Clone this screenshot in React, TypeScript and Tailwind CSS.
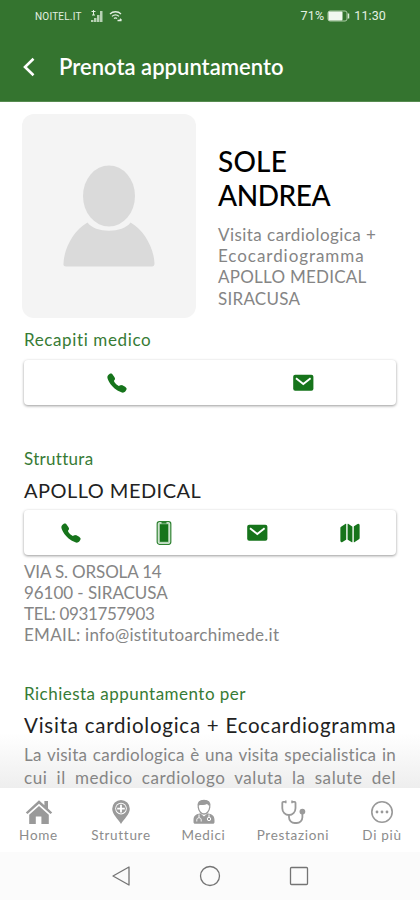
import React from "react";
import { IoCall, IoMap } from "react-icons/io5";

interface NavItem {
  title: string;
  icon: React.ReactNode;
  className: string;
}

const MailIcon = () => (
  <svg width="22" height="22" viewBox="0 0 22 22">
    <rect x="1.200" y="2.800" width="20.200" height="16" rx="2" fill="#16741b" />
    <path d="M4 6.200 11.300 12l7.300-5.800" fill="none" stroke="#fff" strokeWidth="1.900" />
  </svg>
);

const PhoneIcon = () => (
  <svg width="16" height="24" viewBox="0 0 16 24">
    <rect x="1.200" y="0.700" width="13.600" height="22.600" rx="2.200" fill="none" stroke="#2c812f" strokeWidth="1.200" />
    <rect x="2.300" y="1.800" width="11.400" height="20.400" rx="1" fill="#b9d8ba" />
    <rect x="3.800" y="3.200" width="8.400" height="17.600" fill="#16741b" />
    <path d="M5.500 1.800h5" stroke="#16741b" strokeWidth="1.400" />
  </svg>
);

const HomeIcon = () => (
  <svg width="28" height="26" viewBox="0 0 28 26" fill="#9a9a9a">
    <path d="M14 1.200 0.800 13.400l1.700 1.700L14 4.800l11.500 10.300 1.700-1.700-4.200-3.900V2h-3.600v4.200z" />
    <path d="M14 7 4.200 15.700V25h6.600v-7.600h5.600V25h7.400v-9.300z" />
  </svg>
);

const PinIcon = () => (
  <svg width="20" height="26" viewBox="0 0 20 26">
    <path
      d="M10 1a8.800 8.800 0 0 0-8.800 8.800C1.200 15.500 7 20 10 25c3-5 8.800-9.500 8.800-15.200A8.800 8.800 0 0 0 10 1z"
      fill="#9a9a9a"
    />
    <circle cx="10" cy="9.600" r="5.800" fill="#fff" />
    <circle cx="10" cy="9.600" r="4.900" fill="#9a9a9a" />
    <path d="M10 5.800v7.600M6.200 9.600h7.600" stroke="#fff" strokeWidth="1.800" />
  </svg>
);

const DoctorIcon = () => (
  <svg width="24" height="26" viewBox="0 0 24 26">
    <path
      d="M6.300 8.500C5.200 3.500 8 1.300 12 1.300s6.800 2.200 5.700 7.200C17.200 12.400 14.500 15 12 15s-5.200-2.600-5.700-6.500z"
      fill="#fff"
      stroke="#9a9a9a"
      strokeWidth="1.300"
    />
    <path d="M6.300 7.600C5.400 3 8.300 1 12 1s6.600 2 5.700 6.600c-1-1.300-2-2-2.700-2.700-2.200 1.300-6 1-7.300 1.100z" fill="#9a9a9a" />
    <path
      d="M8.300 14.200C4.500 15.300 1.500 16.200 1.500 21v2.300c0 .9.700 1.500 1.600 1.500h17.800c.9 0 1.600-.6 1.600-1.500V21c0-4.800-3-5.700-6.800-6.800L12 17.600z"
      fill="#9a9a9a"
    />
    <path d="M7 15.500v3.200m10-3.200v2.700" stroke="#fff" strokeWidth="1" />
    <circle cx="17" cy="20" r="1.700" fill="none" stroke="#fff" />
    <path d="M4.800 22.500v-1.700c0-2.700 4.400-2.700 4.400 0v1.700" fill="none" stroke="#fff" strokeWidth=".9" />
  </svg>
);

const StethoscopeIcon = () => (
  <svg width="26" height="26" viewBox="0 0 26 26" fill="none" stroke="#9a9a9a">
    <path
      d="M5.800 2.800H3.300c-.7 0-1 .4-1 1v5.400c0 3.800 3 6.800 6.600 6.800s6.600-3 6.600-6.800V3.800c0-.6-.3-1-1-1H12"
      strokeWidth="1.800"
    />
    <path d="M9 16v2.300a5.700 5.700 0 0 0 5.700 5.700h2a5.700 5.700 0 0 0 5.700-5.700V15" strokeWidth="1.800" />
    <circle cx="22.400" cy="12.600" r="1.500" strokeWidth="2.800" />
    <path d="M5.800 1.500v2.700M12 1.500v2.700" strokeWidth="1.500" />
  </svg>
);

const MoreIcon = () => (
  <svg width="24" height="24" viewBox="0 0 24 24">
    <circle cx="12" cy="12" r="10.200" fill="none" stroke="#999" strokeWidth="1.600" />
    <circle cx="7" cy="12" r="1.400" fill="#999" />
    <circle cx="12" cy="12" r="1.400" fill="#999" />
    <circle cx="17" cy="12" r="1.400" fill="#999" />
  </svg>
);

const navItems: NavItem[] = [
  { title: "Home", icon: <HomeIcon />, className: "w-[77px]" },
  { title: "Strutture", icon: <PinIcon />, className: "w-[88px]" },
  { title: "Medici", icon: <DoctorIcon />, className: "w-[77px]" },
  { title: "Prestazioni", icon: <StethoscopeIcon />, className: "w-[102px]" },
  { title: "Di più", icon: <MoreIcon />, className: "w-[76px]" },
];

function StatusBar() {
  return (
    <div className="flex h-8 items-center pl-[35px] pr-[34px] text-[#e3f0e2]">
      <span className="font-['Roboto'] text-[10px] tracking-[0.200px]">NOITEL.IT</span>
      <svg className="ml-2" width="14" height="14" viewBox="0 0 14 14" fill="currentColor">
        <path d="M1 11h2.500v2H1zM4 9h2.500v4H4zM7 6h2.500v7H7zM10 2h2.500v11H10z" opacity=".75" />
        <path d="M1.500 2.500h4M3.500 1v5M2 6h3" stroke="currentColor" fill="none" />
      </svg>
      <svg className="ml-[5px]" width="14" height="14" viewBox="0 0 14 14" fill="none" stroke="currentColor" strokeWidth="1.300">
        <path d="M1 5c3-3 8-3 11 0M3 7.400c2-2 5-2 7 0M5 9.600c1-.9 2-.9 3 0" />
        <path d="M8.500 11.500h4M11 9.800l1.600 1.700" />
      </svg>
      <span className="ml-auto font-['Roboto'] text-[12.500px] tracking-[0.200px]">71%</span>
      <svg className="ml-[3px]" width="23" height="12" viewBox="0 0 23 12">
        <rect x="1" y="1" width="19" height="10" rx="2" fill="none" stroke="#a9cba5" />
        <rect x="1.500" y="1.500" width="14" height="9" rx="1" fill="#f1f8f0" />
        <path d="M21.500 3.500v5" stroke="#d8e8d6" strokeWidth="1.500" />
      </svg>
      <span className="ml-[4px] font-['Roboto'] text-[12.500px] tracking-[0.100px]">11:30</span>
    </div>
  );
}

function ActionBar({ children }: { children: React.ReactNode }) {
  return (
    <div className="flex h-[45px] items-center rounded-[4px] bg-white text-[22px] text-[#16741b] shadow-[0_1px_3px_rgba(0,0,0,0.4)]">
      {React.Children.map(children, (child) => (
        <div className="flex flex-1 justify-center">{child}</div>
      ))}
    </div>
  );
}

export default function App() {
  return (
    <div className="flex h-[900px] w-[420px] flex-col overflow-hidden bg-white font-['Lato',sans-serif] whitespace-nowrap">
      <header className="h-[102px] shrink-0 border-b border-[#568b50] bg-[#34742f]">
        <StatusBar />
        <div className="flex h-[69px] items-center pl-[22px] text-white">
          <svg width="14" height="20" viewBox="0 0 14 20" fill="none" stroke="currentColor" strokeWidth="2.600">
            <path d="M11.500 1.800 3 10l8.500 8.200" />
          </svg>
          <h1 className="ml-[23px] text-[22px] font-semibold tracking-[0.020px]">Prenota appuntamento</h1>
        </div>
      </header>

      <main className="h-[686px] shrink-0 overflow-hidden bg-linear-to-b from-white from-92% to-[#eeeeee] px-6 pt-3">
        <section className="-ml-[2px] flex h-[204px]">
          <div className="flex h-[204px] w-[174px] items-center justify-center rounded-xl bg-[#f4f4f4]">
            <svg width="94" height="102" viewBox="0 0 94 102" fill="#dadada">
              <ellipse cx="47" cy="31" rx="26" ry="30.500" />
              <path d="M25.500 57.500C33 68.500 61 68.500 68.500 57.500 82 65 92 83 92.500 98.500c0 2-1 3-2.500 3H4c-1.500 0-3-1-2.500-3C2 83 12 65 25.500 57.500z" />
            </svg>
          </div>
          <div className="ml-[22px] pt-[30px]">
            <h2 className="text-[28px] leading-[34px] font-medium text-black">
              <span className="block tracking-[0.200px]">SOLE</span>
              <span className="block tracking-[-0.400px]">ANDREA</span>
            </h2>
            <div className="mt-[12px] text-[17px] leading-[21.200px] text-[#858585]">
              <p className="tracking-[0.450px]">Visita cardiologica +</p>
              <p className="tracking-[0.950px]">Ecocardiogramma</p>
              <p className="tracking-[0.250px]">APOLLO MEDICAL</p>
              <p className="tracking-[0.250px]">SIRACUSA</p>
            </div>
          </div>
        </section>

        <section className="pt-[10px]">
          <h3 className="mb-[8px] text-[17px] leading-6 tracking-[0.620px] text-[#377b35]">Recapiti medico</h3>
          <ActionBar>
            <IoCall />
            <MailIcon />
          </ActionBar>
        </section>

        <section className="pt-[42px]">
          <h3 className="text-[17px] leading-6 tracking-[0.300px] text-[#377b35]">Struttura</h3>
          <h4 className="mt-[6px] mb-[7px] text-[20px] leading-[26px] tracking-[0.470px] text-[#222]">APOLLO MEDICAL</h4>
          <ActionBar>
            <IoCall />
            <PhoneIcon />
            <MailIcon />
            <IoMap />
          </ActionBar>
          <div className="mt-[6px] text-[17px] leading-[21px] text-[#858585]">
            <p className="tracking-[-0.150px]">VIA S. ORSOLA 14</p>
            <p className="tracking-[-0.050px]">96100 - SIRACUSA</p>
            <p className="tracking-[-0.350px]">TEL: 0931757903</p>
            <p className="tracking-[0.270px]">EMAIL: info@istitutoarchimede.it</p>
          </div>
        </section>

        <section className="pt-[37px]">
          <h3 className="text-[17px] leading-6 tracking-[0.480px] text-[#377b35]">Richiesta appuntamento per</h3>
          <h4 className="mt-[6px] text-[20.500px] leading-[26px] tracking-[0.760px] text-[#222]">
            Visita cardiologica + Ecocardiogramma
          </h4>
          <div className="mt-[5px] text-[17px] leading-[23px] text-[#858585]">
            <p className="tracking-[0.250px] [text-align-last:justify]">La visita cardiologica è una visita specialistica in</p>
            <p className="tracking-[0.600px] [text-align-last:justify]">cui il medico cardiologo valuta la salute del</p>
          </div>
        </section>
      </main>

      <nav className="flex h-16 shrink-0 bg-white pt-[11px]">
        {navItems.map((item) => (
          <div key={item.title} className={`flex flex-col items-center ${item.className}`}>
            <div className="flex h-[26px] items-center">{item.icon}</div>
            <span className="mt-[2px] text-[13.500px] leading-4 tracking-[0.700px] text-[#8c8c8c]">{item.title}</span>
          </div>
        ))}
      </nav>

      <footer className="flex h-12 shrink-0 items-center justify-center gap-[67px] bg-[#fbfbfb]">
        <svg width="22" height="22" viewBox="0 0 22 22" fill="none" stroke="#747474" strokeWidth="1.300">
          <path d="M19 2v18L3 11z" strokeLinejoin="round" />
        </svg>
        <svg width="22" height="22" viewBox="0 0 22 22" fill="none" stroke="#747474" strokeWidth="1.300">
          <circle cx="11" cy="11" r="9.500" />
        </svg>
        <svg width="22" height="22" viewBox="0 0 22 22" fill="none" stroke="#747474" strokeWidth="1.300">
          <rect x="2.500" y="2.500" width="17" height="17" rx="1" />
        </svg>
      </footer>
    </div>
  );
}
